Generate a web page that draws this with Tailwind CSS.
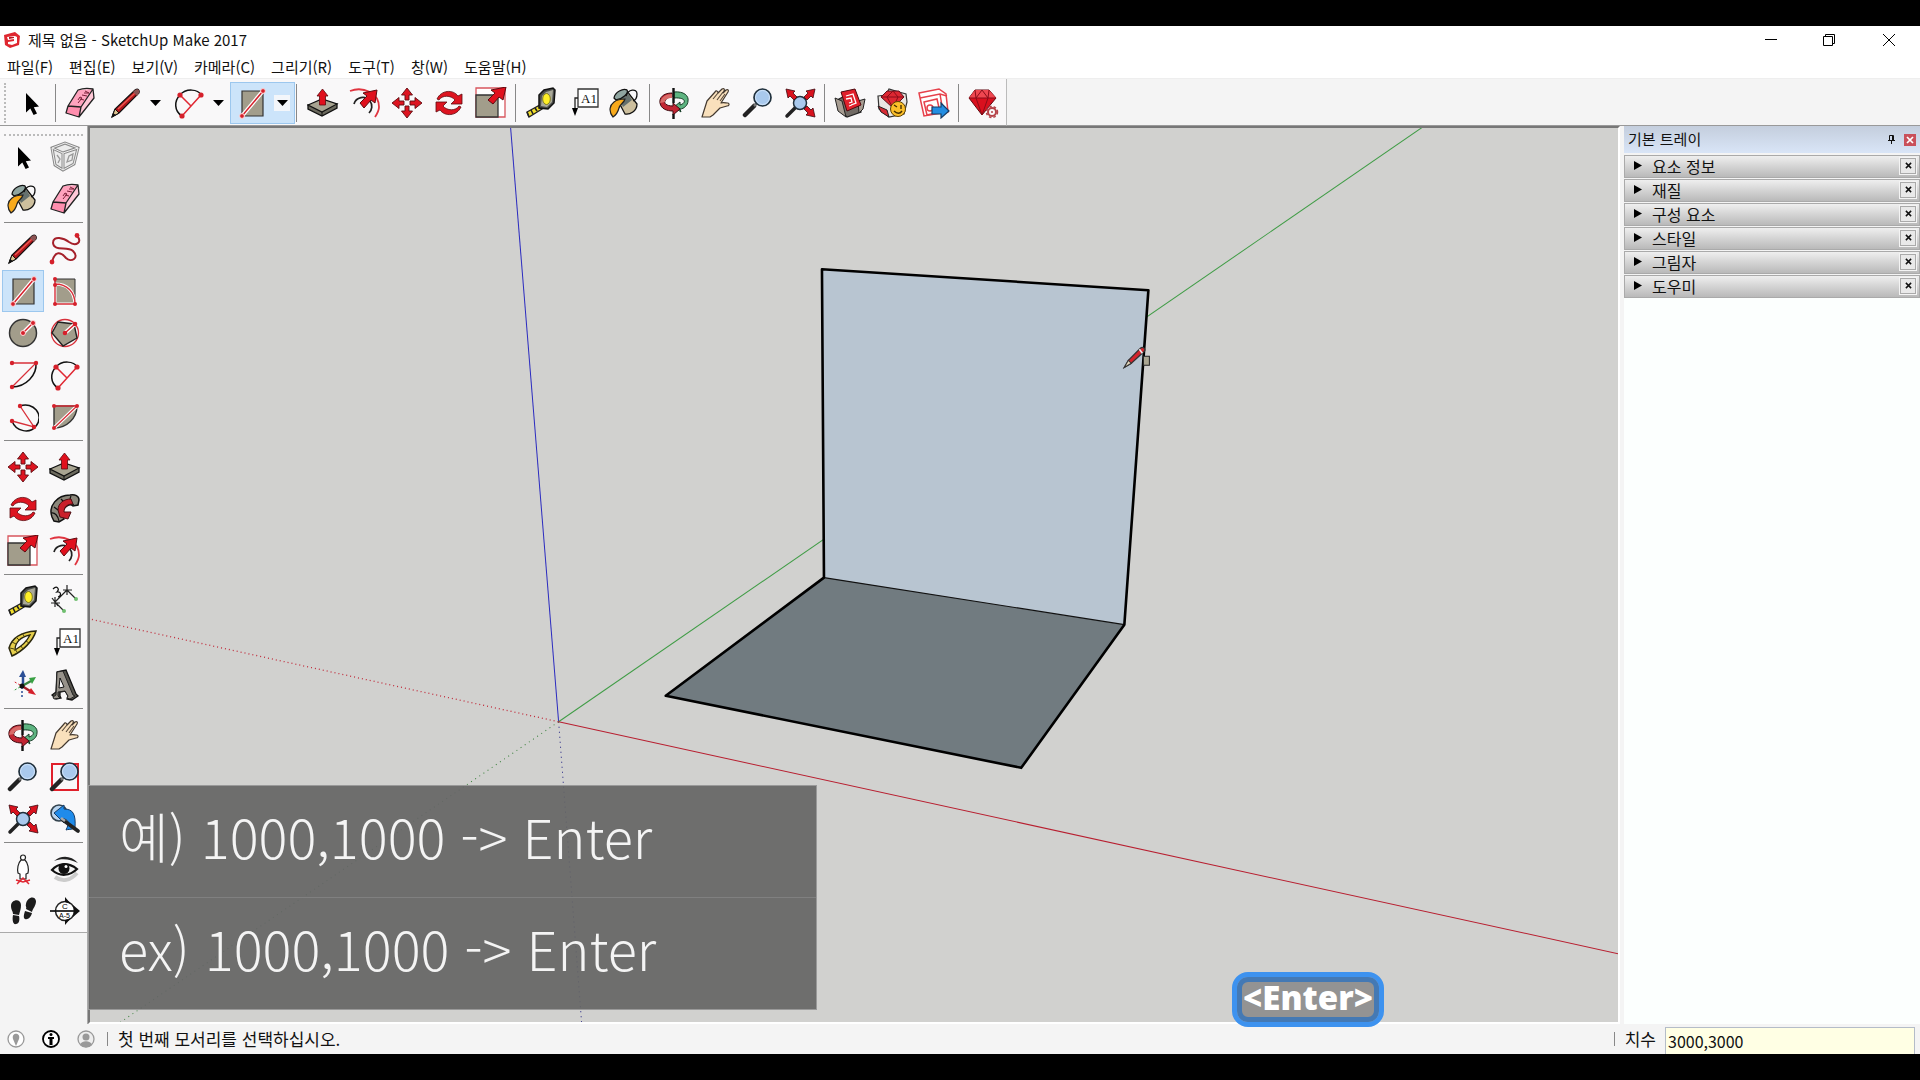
<!DOCTYPE html>
<html lang="ko">
<head>
<meta charset="utf-8">
<title>제목 없음 - SketchUp Make 2017</title>
<script src="https://cdn.jsdelivr.net/npm/@tailwindcss/browser@4"></script>
</head>
<body class="flex h-screen flex-col overflow-hidden bg-black py-[26px] font-['Noto_Sans_CJK_KR',sans-serif] text-[15px] text-[#111]">

<svg class="hidden" aria-hidden="true">
  <symbol id="select" viewBox="0 0 32 32"><path d="M11 6v19.500l4.300-4 3.300 6.500 3.400-1.600-3.200-6.200 5.200-.6z" fill="#000"/></symbol>
  <symbol id="component" viewBox="0 0 32 32"><path d="M3 7l13-5 13 5-4 16-11 6L6 24z" fill="#ececec"/><g fill="none" stroke="#8a8a8a" stroke-width="3"><path d="M3 7l13-5 13 5-4 16-11 6L6 24zM3 7l11 5 15-5M14 12v17"/></g><g fill="none" stroke="#eee" stroke-width="1"><path d="M3 7l13-5 13 5-4 16-11 6L6 24zM3 7l11 5 15-5M14 12v17"/></g><path d="M8 14l3 4-2 4M18 21l2-6 4-2-1 6z" fill="none" stroke="#999" stroke-width="1.300"/></symbol>
  <symbol id="bucket" viewBox="0 0 32 32"><path d="M7 10L17 3l11 14c0 7-7 11-12 10z" fill="#cdbf9d" stroke="#111" stroke-width="1.300"/><path d="M10 12L19 6l4 7-9 7z" fill="#65706d"/><path d="M5 11C6 5 14 1 18 3c2 3-4 9-11 10z" fill="#8fa5a0" stroke="#111" stroke-width="1.300"/><path d="M17 9c2-7 11-8 11-2 0 3-1 6-4 7" fill="none" stroke="#111" stroke-width="1.300"/><path d="M4 30c-5-6-3-12 1-15 4-3 7-3 11-3-1 4-5 5-6 9-1 4-3 7-6 9z" fill="#f8aa1c" stroke="#222" stroke-width="1.200"/></symbol>
  <symbol id="eraser" viewBox="0 0 32 32"><path d="M14 3l15-1L17 20 4 19z" fill="#ffa3be"/><path d="M4 19l13 1-2 10-13-4z" fill="#ff8eae"/><path d="M29 2l1 9-15 19 2-10z" fill="#ffc8d7"/><path d="M14 3c5-2 10-2 15-1l1 9-15 19-13-4 2-7zM4 19l13 1L29 2M17 20l-2 10" fill="none" stroke="#222" stroke-width="1.300" stroke-linejoin="round"/><path d="M14 16l4-5-2-1-2 3M16 12l4 1M18 8l5 1M20 6l5 0M21 4l4 2" stroke="#7a2038" fill="none"/></symbol>
  <symbol id="pencil" viewBox="0 0 32 32"><path d="M2 30l3-8L25 3c3-2 5 0 4 3L9 26z" fill="#b3161c" stroke="#111" stroke-width="1.200"/><path d="M2 30l3-8 4 4z" fill="#dfc391" stroke="#111"/><path d="M2 30l1-4 3 2z" fill="#111"/><path d="M8 22L25 6" stroke="#ec5a52" stroke-width="1.300"/><path d="M23 5l4 4 2-3c1-3-1-5-4-3z" fill="#8b5353"/></symbol>
  <symbol id="arc2" viewBox="0 0 32 32"><path d="M7 8C13 1 25 2 28 8M7 8C1 14 1 24 9 29" fill="none" stroke="#111" stroke-width="1.500"/><path d="M9 29L28 8M7 8l11 11" stroke="#e02833" stroke-width="1.500"/><g fill="#d5202b"><circle cx="7" cy="8" r="2.600"/><circle cx="28" cy="8" r="2.600"/><circle cx="9" cy="29" r="2.600"/></g></symbol>
  <symbol id="rect" viewBox="0 0 32 32"><path d="M6 4h21v25H6z" fill="#a29d8b" stroke="#333" stroke-width="1.200"/><path d="M6 29L27 4" stroke="#fff" stroke-width="4"/><path d="M6 29L27 4" stroke="#d5202b" stroke-width="1.500"/><g fill="#d5202b" stroke="#ffd5d5" stroke-width="1"><circle cx="6" cy="29" r="2.400"/><circle cx="27" cy="4" r="2.400"/></g></symbol>
  <symbol id="push" viewBox="0 0 32 32"><path d="M1 18v4l14 7 15-8v-4z" fill="#6c6a5e" stroke="#111" stroke-width="1.300"/><path d="M1 18l14-6 15 5-15 8z" fill="#a8a491" stroke="#111" stroke-width="1.200"/><path d="M15 25v4" stroke="#111"/><path d="M15.500 2L21 9h-2.500v9h-6V9H10z" fill="#e0101d" stroke="#5d0b10" stroke-width=".8"/></symbol>
  <symbol id="offset" viewBox="0 0 32 32"><path d="M1 4C14-1 30 6 30 20c0 4-2 7-4 10" fill="none" stroke="#e03540" stroke-width="1.800"/><path d="M5 17c2-7 11-9 16-3 3 4 2 9-1 12" fill="none" stroke="#222" stroke-width="1.700"/><path d="M28 3l-2 13-4-3-7 8-4-5 7-7-4-3z" fill="#e0101d" stroke="#5d0b10"/></symbol>
  <symbol id="move" viewBox="0 0 32 32"><g fill="#dd1420" stroke="#5d0b10" stroke-width=".9"><path id="up" d="M16 1l5.500 7H18v5h-4V8h-3.500z"/><use href="#up" transform="rotate(90 16 16)"/><use href="#up" transform="rotate(180 16 16)"/><use href="#up" transform="rotate(270 16 16)"/></g></symbol>
  <symbol id="rotate" viewBox="0 0 32 32"><g fill="#dd1420" stroke="#5d0b10" stroke-width=".8"><path id="turn" d="M4 12C8 3 20 2 25 9l4-2v10H18l4-4C18 8 9 8 6 13z"/><use href="#turn" transform="rotate(180 16 16)"/></g></symbol>
  <symbol id="scale" viewBox="0 0 32 32"><path d="M1 1h29v29H1z" fill="#fff" stroke="#d8565e" stroke-width="1.300"/><path d="M1 8h22v22H1z" fill="#a29d8b" stroke="#333" stroke-width="1.300"/><path d="M31 0l-3 13-4-3-6 7-5-4 7-7-4-3z" fill="#e0101d" stroke="#5d0b10"/></symbol>
  <symbol id="tape" viewBox="0 0 32 32"><path d="M2 25l13-7 2 4L4 30z" fill="#f2df2c" stroke="#222" stroke-width="1.300"/><path d="M2 25l2 5M6 23l2 4M10 21l2 3" stroke="#222" stroke-width="1.600"/><path d="M14 8l5-5 9-2 2 2-1 13-6 6-9-1z" fill="#4c4e4b" stroke="#111" stroke-width="1.500"/><path d="M17 9l4-4 7-2-1 12-5 5-6-1z" fill="#aaa999"/><ellipse cx="21.500" cy="12" rx="3.800" ry="5.500" fill="#ffef28" stroke="#6f6a12" stroke-width=".8"/></symbol>
  <symbol id="label" viewBox="0 0 32 32"><path d="M11 2h20v18H11z" fill="#fff" stroke="#333" stroke-width="1.300"/><path d="M11 11H8v11" fill="none" stroke="#222" stroke-width="1.300"/><path d="M5 21h6L8 29z" fill="#000"/><text x="14" y="15.500" font-family="Liberation Serif" font-size="13" fill="#111">A1</text></symbol>
  <symbol id="orbit" viewBox="0 0 32 32"><path d="M16 5c10-1 15 4 14 9 0 4-4 8-8 8l1 3-7-5 6-5v3c7-2 6-8-6-7z" fill="#5eb481" stroke="#173d27"/><path d="M14 6C5 6 1 11 2 16c1 6 7 8 13 8v4l7-6-7-6v3c-7 0-9-3-8-5 1-3 4-4 7-4z" fill="#c02532" stroke="#3e0a10"/><path d="M2 16c1-6 6-9 12-9v4c-4 0-7 1-7 4z" fill="#d96a68"/><path d="M15.500 1v15M15.500 27v5" stroke="#111" stroke-width="2.400"/></symbol>
  <symbol id="hand" viewBox="0 0 32 32"><path d="M2 30l5-16 8-9c1-2 3-1 3 1l4-4c2-1 3 0 2 2l-1 2 3-3c2-1 3 0 2 2l-7 11c2-1 5 0 7 0 2 1 1 3-1 3l-7 2-7 7-3 2z" fill="#f9e0bc" stroke="#42382f" stroke-width="1.200" stroke-linejoin="round"/><path d="M13 12l5-6M17 13l6-8M20 14l5-7" stroke="#57483a" stroke-width="1.100"/></symbol>
  <symbol id="lens" viewBox="0 0 32 32"><path d="M3 28l9-9" stroke="#222" stroke-width="4.500" stroke-linecap="round"/><path d="M12 19l3-3" stroke="#777" stroke-width="2.500"/><circle cx="20.500" cy="10.500" r="8.500" fill="#a9c9ed" stroke="#20303c" stroke-width="1.700"/><circle cx="20.500" cy="10.500" r="7" fill="none" stroke="#d9eafc" stroke-width=".8"/></symbol>
  <symbol id="zoomwin" viewBox="0 0 32 32"><path d="M3 3h26v26H3z" fill="none" stroke="#e0202b" stroke-width="2"/><use href="#lens" width="32" height="32"/></symbol>
  <symbol id="extents" viewBox="0 0 32 32"><path d="M3 29l8-8" stroke="#222" stroke-width="3.500" stroke-linecap="round"/><circle cx="16" cy="16" r="6.500" fill="#a9c9ed" stroke="#20303c" stroke-width="1.500"/><g fill="#d8121e" stroke="#3e0a10" stroke-width=".8"><path d="M2 2l9 2-2 2 4 4-3 3-4-4-2 2zM31 2l-9 2 2 2-4 4 3 3 4-4 2 2zM31 30l-2-9-2 2-4-4-3 3 4 4-2 2z"/></g></symbol>
  <symbol id="previous" viewBox="0 0 32 32"><circle cx="10" cy="10" r="8" fill="#b9d4ee" stroke="#33424d" stroke-width="1.600"/><path d="M5 10l10-8v4c9 0 12 5 11 19-4 2-7 1-9 2 4-8 2-11-3-11l1 4z" fill="#1f8bea" stroke="#143b66"/><path d="M14 17l15 11" stroke="#222" stroke-width="3.800" stroke-linecap="round"/><path d="M12 15l4 3" stroke="#aaa" stroke-width="2.500"/></symbol>
  <symbol id="warehouse" viewBox="0 0 32 32"><path d="M3 13l6-3 17 4 1 11-14 5-7-6z" fill="#716b65" stroke="#222" stroke-width="1.200"/><path d="M1 11l7 3 4 16-8-6zM31 12l-7 2 1 12 4-4z" fill="#a79d92" stroke="#222"/><path d="M7 5l14-3 6 16-14 6z" fill="#e0202b" stroke="#4d090e"/><path d="M12 9l7-2 3 9-5 2M12 12l5-1 1 4-3 1M15 19l3-1" fill="none" stroke="#fff" stroke-width="1.300"/></symbol>
  <symbol id="extension" viewBox="0 0 32 32"><path d="M2 9l8-1 3-6 10 3 7 2 1 8-3 12-15 3L3 22z" fill="#e9e6e2" stroke="#333" stroke-width="1.200"/><path d="M5 10l6-6h12l5 6-11 11z" fill="#dd2732" stroke="#58111a"/><path d="M5 10h23M11 10l6 11 5-11-5-6z" fill="none" stroke="#8b0d18"/><path d="M2 19l9 4 2 7-8-5z" fill="#d62b35" stroke="#222"/><circle cx="22" cy="22" r="7.500" fill="#fcbf2a" stroke="#604300"/><path d="M18 18l3 2M25 18v4M18 24c3 3 6 3 8 0" fill="none" stroke="#463000" stroke-width="1.400"/></symbol>
  <symbol id="layout" viewBox="0 0 32 32"><path d="M1 6l20-4 7 5 2 18-24 4z" fill="#fff" stroke="#e6414b" stroke-width="1.500"/><path d="M2 11l20-4 7 2M6 15l13-3 3 13-13 3zM22 7l3 18" fill="none" stroke="#e6414b" stroke-width="1.500"/><circle cx="12" cy="21" r="3" fill="#fff" stroke="#e6414b" stroke-width="1.500"/><path d="M14 20h9v-4l8 8-8 7v-4h-9z" fill="#238de2" stroke="#163c65" stroke-width="1.200"/></symbol>
  <symbol id="gem" viewBox="0 0 32 32"><path d="M2 11l6-8h14l7 8-14 17z" fill="#d9101e" stroke="#5f0911"/><path d="M2 11l6-8h14l7 8z" fill="#ef4750"/><path d="M2 11h27M9 11l6 17 6-17-6-8zM8 3l1 8M22 3l-1 8" fill="none" stroke="#8b0d18"/><circle cx="25" cy="25" r="4" fill="#f8f7f8" stroke="#b54349" stroke-width="2"/><circle cx="25" cy="25" r="5.500" fill="none" stroke="#b54349" stroke-width="1.500" stroke-dasharray="2.500 2"/><circle cx="25" cy="25" r="1" fill="#b54349"/></symbol>
  <symbol id="freehand" viewBox="0 0 32 32"><path d="M3 29c3-12 9-10 14-4 5 5 14 0 7-7C18 13 5 19 4 10 4 2 15 5 20 9c7 5 14 0 8-6" fill="none" stroke="#a5202a" stroke-width="2"/><g fill="#d5202b"><circle cx="3" cy="29" r="2.400"/><circle cx="28" cy="2.500" r="2.400"/></g></symbol>
  <symbol id="rotrect" viewBox="0 0 32 32"><path d="M6 4h20v25H6z" fill="#a29d8b" stroke="#333"/><path d="M6 9c12 0 19 7 20 20H6z" fill="#a29d8b" stroke="#fff" stroke-width="3"/><path d="M6 4v25h20M6 9c12 0 20 8 20 20" fill="none" stroke="#d8303a" stroke-width="1.400"/><g fill="#d5202b"><circle cx="6" cy="4" r="2"/><circle cx="6" cy="10" r="2"/><circle cx="6" cy="29" r="2"/><circle cx="26" cy="29" r="2"/></g></symbol>
  <symbol id="circle" viewBox="0 0 32 32"><circle cx="16" cy="16" r="13.500" fill="#a29d8b" stroke="#333" stroke-width="1.500"/><path d="M16 16l10-10" stroke="#fff" stroke-width="4"/><path d="M16 16l10-10" stroke="#d5202b" stroke-width="1.400"/><g fill="#d5202b" stroke="#ffd5d5"><circle cx="16" cy="16" r="2.500"/><circle cx="26" cy="6" r="2.500"/></g></symbol>
  <symbol id="polygon" viewBox="0 0 32 32"><circle cx="16" cy="16" r="13.500" fill="none" stroke="#d8303a" stroke-width="1.300"/><path d="M9 5l16 2 3 14-14 8L3 16z" fill="#a29d8b" stroke="#222" stroke-width="1.400"/><path d="M16 16l10-9" stroke="#fff" stroke-width="4"/><path d="M16 16l10-9" stroke="#d5202b" stroke-width="1.400"/><g fill="#d5202b"><circle cx="16" cy="16" r="2.300"/><circle cx="26" cy="7" r="2.300"/></g></symbol>
  <symbol id="arc" viewBox="0 0 32 32"><path d="M29 4c1 12-10 24-24 24" fill="none" stroke="#111" stroke-width="1.500"/><path d="M5 4h24L5 28" fill="none" stroke="#d8303a" stroke-width="1.300"/><g fill="#d5202b"><circle cx="5" cy="4" r="2.200"/><circle cx="29" cy="4" r="2.200"/><circle cx="5" cy="28" r="2.200"/></g></symbol>
  <symbol id="arc3" viewBox="0 0 32 32"><path d="M13 5c13-5 25 9 16 20-6 8-20 6-24-5" fill="none" stroke="#111" stroke-width="1.500"/><path d="M13 5l14 21-22-6" fill="none" stroke="#d8303a" stroke-width="1.300"/><g fill="#d5202b"><circle cx="13" cy="5" r="2.200"/><circle cx="27" cy="26" r="2.200"/><circle cx="5" cy="20" r="2.200"/></g></symbol>
  <symbol id="pie" viewBox="0 0 32 32"><path d="M5 5h23c0 12-10 22-23 22z" fill="#a29d8b" stroke="#333" stroke-width="1.400"/><path d="M5 27L28 5" stroke="#fff" stroke-width="3.500"/><path d="M5 5h23L5 27" fill="none" stroke="#d8303a" stroke-width="1.300"/><g fill="#d5202b"><circle cx="5" cy="5" r="2"/><circle cx="28" cy="5" r="2"/><circle cx="5" cy="27" r="2"/></g></symbol>
  <symbol id="follow" viewBox="0 0 32 32"><path d="M3 24C-1 13 8 2 21 2c5-1 9 1 9 5l-1 5-5 1c-3-3-8 0-10 5-1 3 0 6 1 8l-5 3-5-1z" fill="#8b877b" stroke="#111" stroke-width="1.500"/><path d="M22 3c-2 4 0 8 3 9M2 20c4-1 7 3 8 8M5 14l4 3M12 6l3 3" fill="none" stroke="#111" stroke-width="1.200"/><path d="M9 17C9 10 15 6 22 6l2 5c-6 0-9 3-9 8l7 0-3 7-8-2z" fill="#c9202b" stroke="#4d0d12"/></symbol>
  <symbol id="dimension" viewBox="0 0 32 32"><path d="M6 17L18 5M6 17l9 9M18 5l9 9M3 13l6 8M18 0v10M14 5h9M6 12v10M2 18h9" stroke="#222" stroke-width="1.200"/><path d="M4 4c4-4 7 0 4 3 4-1 5 4 1 5" fill="none" stroke="#111" stroke-width="1.200"/><circle cx="15" cy="26" r="2" fill="#6fbf6f"/><circle cx="27" cy="14" r="2" fill="#6fbf6f"/></symbol>
  <symbol id="protractor" viewBox="0 0 32 32"><path d="M5 29L2 21C5 11 14 5 29 4 26 14 16 24 5 29z" fill="#e6cf4b" stroke="#29260d" stroke-width="1.500"/><path d="M8 23C8 16 13 10 23 8 20 14 15 19 8 23z" fill="#f8f7f8" stroke="#29260d" stroke-width="1.300"/><path d="M3 21l4 1M5 15l4 2M9 10l3 3M15 6l2 3M10 25l-2-3M16 22l-2-3M22 16l-3-2" stroke="#4a4210"/></symbol>
  <symbol id="axes" viewBox="0 0 32 32"><path d="M16 17V7" stroke="#2b4f96" stroke-width="2.500"/><path d="M12 8l4-7 3 7z" fill="#2b4f96"/><path d="M15 17l9-5" stroke="#38853f" stroke-width="2.500"/><path d="M22 9l7-1-4 7z" fill="#38a043"/><path d="M15 17l8 5" stroke="#a9202a" stroke-width="2.500"/><path d="M24 19l5 7-8-2z" fill="#d5202b"/><path d="M15 18v10" stroke="#2b4f96" stroke-dasharray="2 2" stroke-width="1.500"/><path d="M13 16l-7-4" stroke="#d5202b" stroke-dasharray="2 2"/><path d="M13 18l-7 4" stroke="#38a043" stroke-dasharray="2 2"/><circle cx="15" cy="17" r="2.500" fill="#111"/></symbol>
  <symbol id="text3d" viewBox="0 0 32 32"><path d="M8 3l9-2 10 24 2 2-6 4-5-1 1-3-3-5-5 1v4l1 2-5 1-4-4 4-3z" fill="#55534c" stroke="#111" stroke-width="1.300"/><path d="M8 3l6-1 10 24 2 1-5 3-3-1 1-2-3-5-7 1v4l2 2-6 1-1-2 3-2z" fill="#97928a" stroke="#222"/><path d="M11 9l4 9-5 1z" fill="#f8f7f8" stroke="#111"/></symbol>
  <symbol id="camera" viewBox="0 0 32 32"><path d="M14 7c-3 3-4 9-3 13l2 1v5h6v-5l2-1c1-4 0-10-3-13z" fill="#fff" stroke="#222" stroke-width="1.200"/><circle cx="16" cy="4.500" r="2.500" fill="#fff" stroke="#222" stroke-width="1.200"/><path d="M10 31l6-6 6 6M9 27l7 2 7-2" fill="none" stroke="#e02833" stroke-width="1.500"/></symbol>
  <symbol id="look" viewBox="0 0 32 32"><path d="M6 24c7 5 15 4 22-4" stroke="#ccc" stroke-width="4" fill="none"/><path d="M3 17c6-7 16-8 25-1-7 7-17 8-25 1z" fill="#f3f3f3" stroke="#111" stroke-width="2.200"/><circle cx="15" cy="15.500" r="5.500" fill="#111"/><circle cx="17" cy="13.500" r="1.500" fill="#fff"/><path d="M5 8C12 2 22 2 29 10c-8-4-16-5-24-2z" fill="#222"/></symbol>
  <symbol id="walk" viewBox="0 0 32 32"><g fill="#1c1c1c"><path d="M4 11c0-7 10-8 10-1 0 4-1 6-2 10l-6-1c0-3-2-4-2-8zM6 20l6 1c1 4 0 8-3 8-3 1-4-4-3-9z"/><path d="M19 9c1-7 9-9 10-3 0 5-3 7-4 11l-6-3c1-2-1-3 0-5zM18 16l7 2c-1 4-4 7-7 6-2-1-1-5 0-8z"/></g></symbol>
  <symbol id="section" viewBox="0 0 32 32"><circle cx="16" cy="16" r="9.500" fill="#fff" stroke="#222" stroke-width="1.500"/><path d="M1 16h28" stroke="#111" stroke-width="1.700"/><path d="M16 2v5l6 2zM24 10l7 6-7 6 1-6zM16 30v-5l6-2z" fill="#111"/><text x="13" y="14" font-family="Liberation Sans" font-size="8">C</text><text x="10" y="23" font-family="Liberation Sans" font-size="7">A-5</text></symbol>
  <symbol id="shut" viewBox="0 0 8 8"><path d="M1 1l6 6M7 1L1 7" stroke="currentColor" stroke-width="1.700"/></symbol>
</svg>

<header class="shrink-0 bg-white">
  <div class="flex h-7 items-center justify-between">
    <h1 class="flex items-center gap-2 pl-1 text-[15px]">
      <svg class="size-4" viewBox="0 0 16 16"><path d="M0 3l11-3 5 4-1 9-9 3-5-3z" fill="#df2730"/><path d="M3 5l8-1 2 1v6l-5 2-4-1v-2l6-1V7L4 8z" fill="#fff"/><path d="M5 5l5 0v1l-5 1z" fill="#b81520"/></svg>
      제목 없음 - SketchUp Make 2017
    </h1>
    <div class="flex">
      <button class="grid h-7 w-[58px] place-items-center" aria-label="최소화"><svg class="size-3" viewBox="0 0 12 12"><path d="M0 5.500h12" stroke="#000"/></svg></button>
      <button class="grid h-7 w-[58px] place-items-center" aria-label="이전 크기로"><svg class="size-3" viewBox="0 0 12 12" fill="none" stroke="#000"><path d="M.5 2.500h9v9h-9zM2.500 2.500v-2h9v9h-2"/></svg></button>
      <button class="grid h-7 w-[62px] place-items-center" aria-label="닫기"><svg class="size-3" viewBox="0 0 12 12"><path d="M0 0l12 12M12 0L0 12" stroke="#000"/></svg></button>
    </div>
  </div>
  <nav class="flex h-6 items-center gap-4 pt-0.5 pl-[7px]">
    <button>파일(F)</button><button>편집(E)</button><button>보기(V)</button><button>카메라(C)</button><button>그리기(R)</button><button>도구(T)</button><button>창(W)</button><button>도움말(H)</button>
  </nav>
</header>

<div class="flex h-12 shrink-0 border-t border-[#eee] bg-[#f4f4f4]">
  <div class="flex items-center border-r border-b border-r-[#bbb] border-b-[#999] bg-[#f9f8f9] pt-0.5 pr-0.5 pl-1" role="toolbar" id="top">
  </div>
  <div class="flex-1 border-b border-[#999]"></div>
</div>

<div class="flex min-h-0 flex-1 bg-[#f4f4f4]">
  <aside class="w-[88px] shrink-0 border-r border-[#aaa]">
    <div class="border-b border-[#aaa] bg-[#f9f8f9] pt-0.5" role="toolbar" id="side">
      <div class="mx-1 h-2 border-b-2 border-dotted border-[#bbb]"></div>
    </div>
  </aside>

  <main class="relative min-w-0 flex-1 border-t-2 border-r-2 border-b-2 border-l-2 border-t-[#777] border-r-white border-b-white border-l-[#777] bg-[#d1d1cf]">
    <svg class="block size-full" viewBox="91 128 1526 893" preserveAspectRatio="xMinYMin slice" fill="none">
      <path d="M511 127l48 594" stroke="#2b2bc0"/>
      <path d="M559 721l23 301" stroke="#1b1b80" stroke-dasharray="1 4"/>
      <path d="M1422 127L559 721" stroke="#3f9c45"/>
      <path d="M559 721L120 1022" stroke="#3a803c" stroke-dasharray="1 4"/>
      <path d="M89 618l470 103" stroke="#c02a3a" stroke-width="1.300" stroke-dasharray="1 3"/>
      <path d="M559 721l1060 232" stroke="#b81f30"/>
      <path d="M822 269l326 21-24 334-300-47z" fill="#b8c5d1"/>
      <path d="M824 577l300 47-103 143-355-72z" fill="#717b80"/>
      <path d="M824 577l300 47" stroke="#111" stroke-width="1.200"/>
      <path d="M824 577l-2-308 326 21-24 334-103 143-355-72z" stroke="#000" stroke-width="2.600" stroke-linejoin="round"/>
      <path d="M1143 356h6v9h-6z" fill="#aaa692" stroke="#222"/>
      <path d="M1124 367l4-7 12-12c2-2 6 0 4 3l-13 12z" fill="#d3242c" stroke="#333" stroke-width="1.200"/>
      <path d="M1124 367l4-7 3 3z" fill="#e6d8bb" stroke="#333"/>
      <path d="M1139 349l3 4" stroke="#eee" stroke-width="1.500"/>
    </svg>

    <section class="absolute top-[657px] -left-0.5 w-[729px] border border-[#999] bg-[#656565]/92 font-['Noto_Sans_CJK_KR',sans-serif] text-[54px] leading-[100px] font-light whitespace-nowrap text-[#f4f4f4]">
      <p class="h-[112px] border-b border-[#808080] pl-[30px]">예) 1000,1000 -&gt; Enter</p>
      <p class="h-[111px] pl-[30px]">ex) 1000,1000 -&gt; Enter</p>
    </section>
    <kbd class="absolute top-[844px] left-[1142px] flex h-[55px] w-[152px] items-center justify-center rounded-2xl border-[5px] border-[#3d92ef] bg-[#939393] pb-1 font-['Open_Sans',sans-serif] text-[33px] font-extrabold text-white shadow-[inset_0_0_0_5px_#4479b4]">&lt;Enter&gt;</kbd>
  </main>

  <aside class="ml-1 flex w-[296px] shrink-0 flex-col bg-[#fcfffe]">
    <header class="flex h-[27px] items-center bg-linear-to-b from-[#c4cedd] to-[#d9e5f7] pr-1 pl-1">
      <h2 class="flex-1">기본 트레이</h2>
      <button class="grid size-6 place-items-center" aria-label="고정"><svg class="h-[9px] w-[7px]" viewBox="0 0 7 9" fill="none" stroke="#111"><path d="M1.500 5V.5h4V5M4.500 0v5M0 5.500h7M3.500 6v3"/></svg></button>
      <button class="ml-px grid size-3 place-items-center bg-[#c9505a] text-white" aria-label="트레이 닫기"><svg class="size-2"><use href="#shut"/></svg></button>
    </header>
    <div class="flex flex-col gap-px bg-[#f4f4f4] pt-0.5" id="tray"></div>
  </aside>
</div>

<footer class="flex h-[30px] shrink-0 items-center bg-[#f4f4f4] pr-[5px] pl-[7px] text-[17px]">
  <button aria-label="지리적 위치"><svg class="size-[18px]" viewBox="0 0 18 18"><circle cx="9" cy="9" r="8" fill="#fff" stroke="#999" stroke-width="1.300"/><path d="M9 16L6 9c-2-7 8-7 6 0z" fill="#999"/></svg></button>
  <button class="ml-[17px]" aria-label="크레딧"><svg class="size-[18px]" viewBox="0 0 18 18"><circle cx="9" cy="9" r="8" fill="#fff" stroke="#000" stroke-width="1.800"/><circle cx="9" cy="4.500" r="1.500"/><path d="M6 7h6v2h-1.500v6h-3V9H6z"/></svg></button>
  <button class="ml-[17px]" aria-label="로그인"><svg class="size-[18px]" viewBox="0 0 18 18"><circle cx="9" cy="9" r="8" fill="#eee" stroke="#999" stroke-width="1.300"/><circle cx="9" cy="7" r="3.500" fill="#999"/><path d="M3 15c1-5 11-5 12 0-3 3-9 3-12 0z" fill="#999"/></svg></button>
  <span class="ml-3 h-3.5 w-px bg-[#888]"></span>
  <p class="ml-2.5 flex-1">첫 번째 모서리를 선택하십시오.</p>
  <span class="h-3.5 w-px bg-[#888]"></span>
  <label for="size" class="ml-2.5">치수</label>
  <input id="size" class="ml-[9px] h-[27px] w-[250px] self-end border border-b-0 border-[#b4bcc8] bg-[#ffffe4] px-0.5 text-base" value="3000,3000">
</footer>

<script>
  const icon = (id, name) => `<button class="grid size-[42px] place-items-center" aria-label="${name}"><svg class="size-8"><use href="#${id}"/></svg></button>`;
  const caret = '<button class="grid h-4 w-4 place-items-center" aria-label="더 보기"><svg class="h-1.5 w-[11px]" viewBox="0 0 11 6"><path d="M0 0h11L5.500 6z"/></svg></button>';
  const bar = '<span class="mx-[3px] h-[38px] w-px bg-[#888]"></span>';
  document.getElementById('top').innerHTML =
    '<span class="mr-1 h-10 border-l-2 border-dotted border-[#bbb]"></span>' + icon('select', '선택') + bar + icon('eraser', '지우개') +
    '<span class="w-1"></span>' + icon('pencil', '선') + caret + '<span class="w-[5px]"></span>' + icon('arc2', '호') + caret +
    '<span class="ml-1 flex h-[42px] items-center border border-[#9cc7ee] bg-[#cce4fa]">' + icon('rect', '사각형') + '<span class="mr-1 ml-px bg-[#f3f6fa]">' + caret + '</span></span>' +
    '<span class="mr-[5px] ml-px h-[38px] w-px bg-[#888]"></span>' + icon('push', '밀기/끌기') + icon('offset', '오프셋') + icon('move', '이동') + icon('rotate', '회전') + icon('scale', '배율') + bar +
    '<span class="w-px"></span>' + icon('tape', '줄자') + icon('label', '텍스트') + icon('bucket', '페인트통') + bar +
    icon('orbit', '궤도') + icon('hand', '이동 보기') + icon('lens', '확대/축소') + icon('extents', '범위 확대') + bar + '<span class="w-px"></span>' +
    icon('warehouse', '3D Warehouse') + icon('extension', 'Extension Warehouse') + icon('layout', 'LayOut') + bar + icon('gem', '확장 관리자');

  const groups = [
    ['select', 'component', 'bucket', 'eraser'],
    ['pencil', 'freehand', 'rect', 'rotrect', 'circle', 'polygon', 'arc', 'arc2', 'arc3', 'pie'],
    ['move', 'push', 'rotate', 'follow', 'scale', 'offset'],
    ['tape', 'dimension', 'protractor', 'label', 'axes', 'text3d'],
    ['orbit', 'hand', 'lens', 'zoomwin', 'extents', 'previous'],
    ['camera', 'look', 'walk', 'section'],
  ];
  document.getElementById('side').innerHTML += groups.map((g, i) =>
    (i ? '<div class="mx-1 mt-0.5 mb-[5px] h-px bg-[#888]"></div>' : '') +
    '<div class="ml-0.5 grid w-[84px] grid-cols-2">' + g.map(id =>
      id === 'rect' ? '<div class="bg-[#cce4fa] outline outline-[#9cc7ee] -outline-offset-1">' + icon(id, id) + '</div>' : icon(id, id)).join('') + '</div>').join('');

  document.getElementById('tray').innerHTML = ['요소 정보', '재질', '구성 요소', '스타일', '그림자', '도우미'].map(t =>
    `<div class="flex h-[23px] items-center border border-[#aaa] bg-linear-to-b from-[#efefef] to-[#b9b9b9] pr-[3px] pb-0.5 pl-[9px] text-base leading-5">
       <button class="flex flex-1 items-center gap-2.5 text-left"><svg class="h-[9px] w-2" viewBox="0 0 8 9"><path d="M0 0l8 4.500L0 9z"/></svg>${t}</button>
       <button class="grid size-4 place-items-center border border-[#aaa] bg-[#e9e9e9] outline outline-[#f4f4f4]" aria-label="${t} 닫기"><svg class="size-[7px]"><use href="#shut"/></svg></button>
     </div>`).join('');
</script>
</body>
</html>
